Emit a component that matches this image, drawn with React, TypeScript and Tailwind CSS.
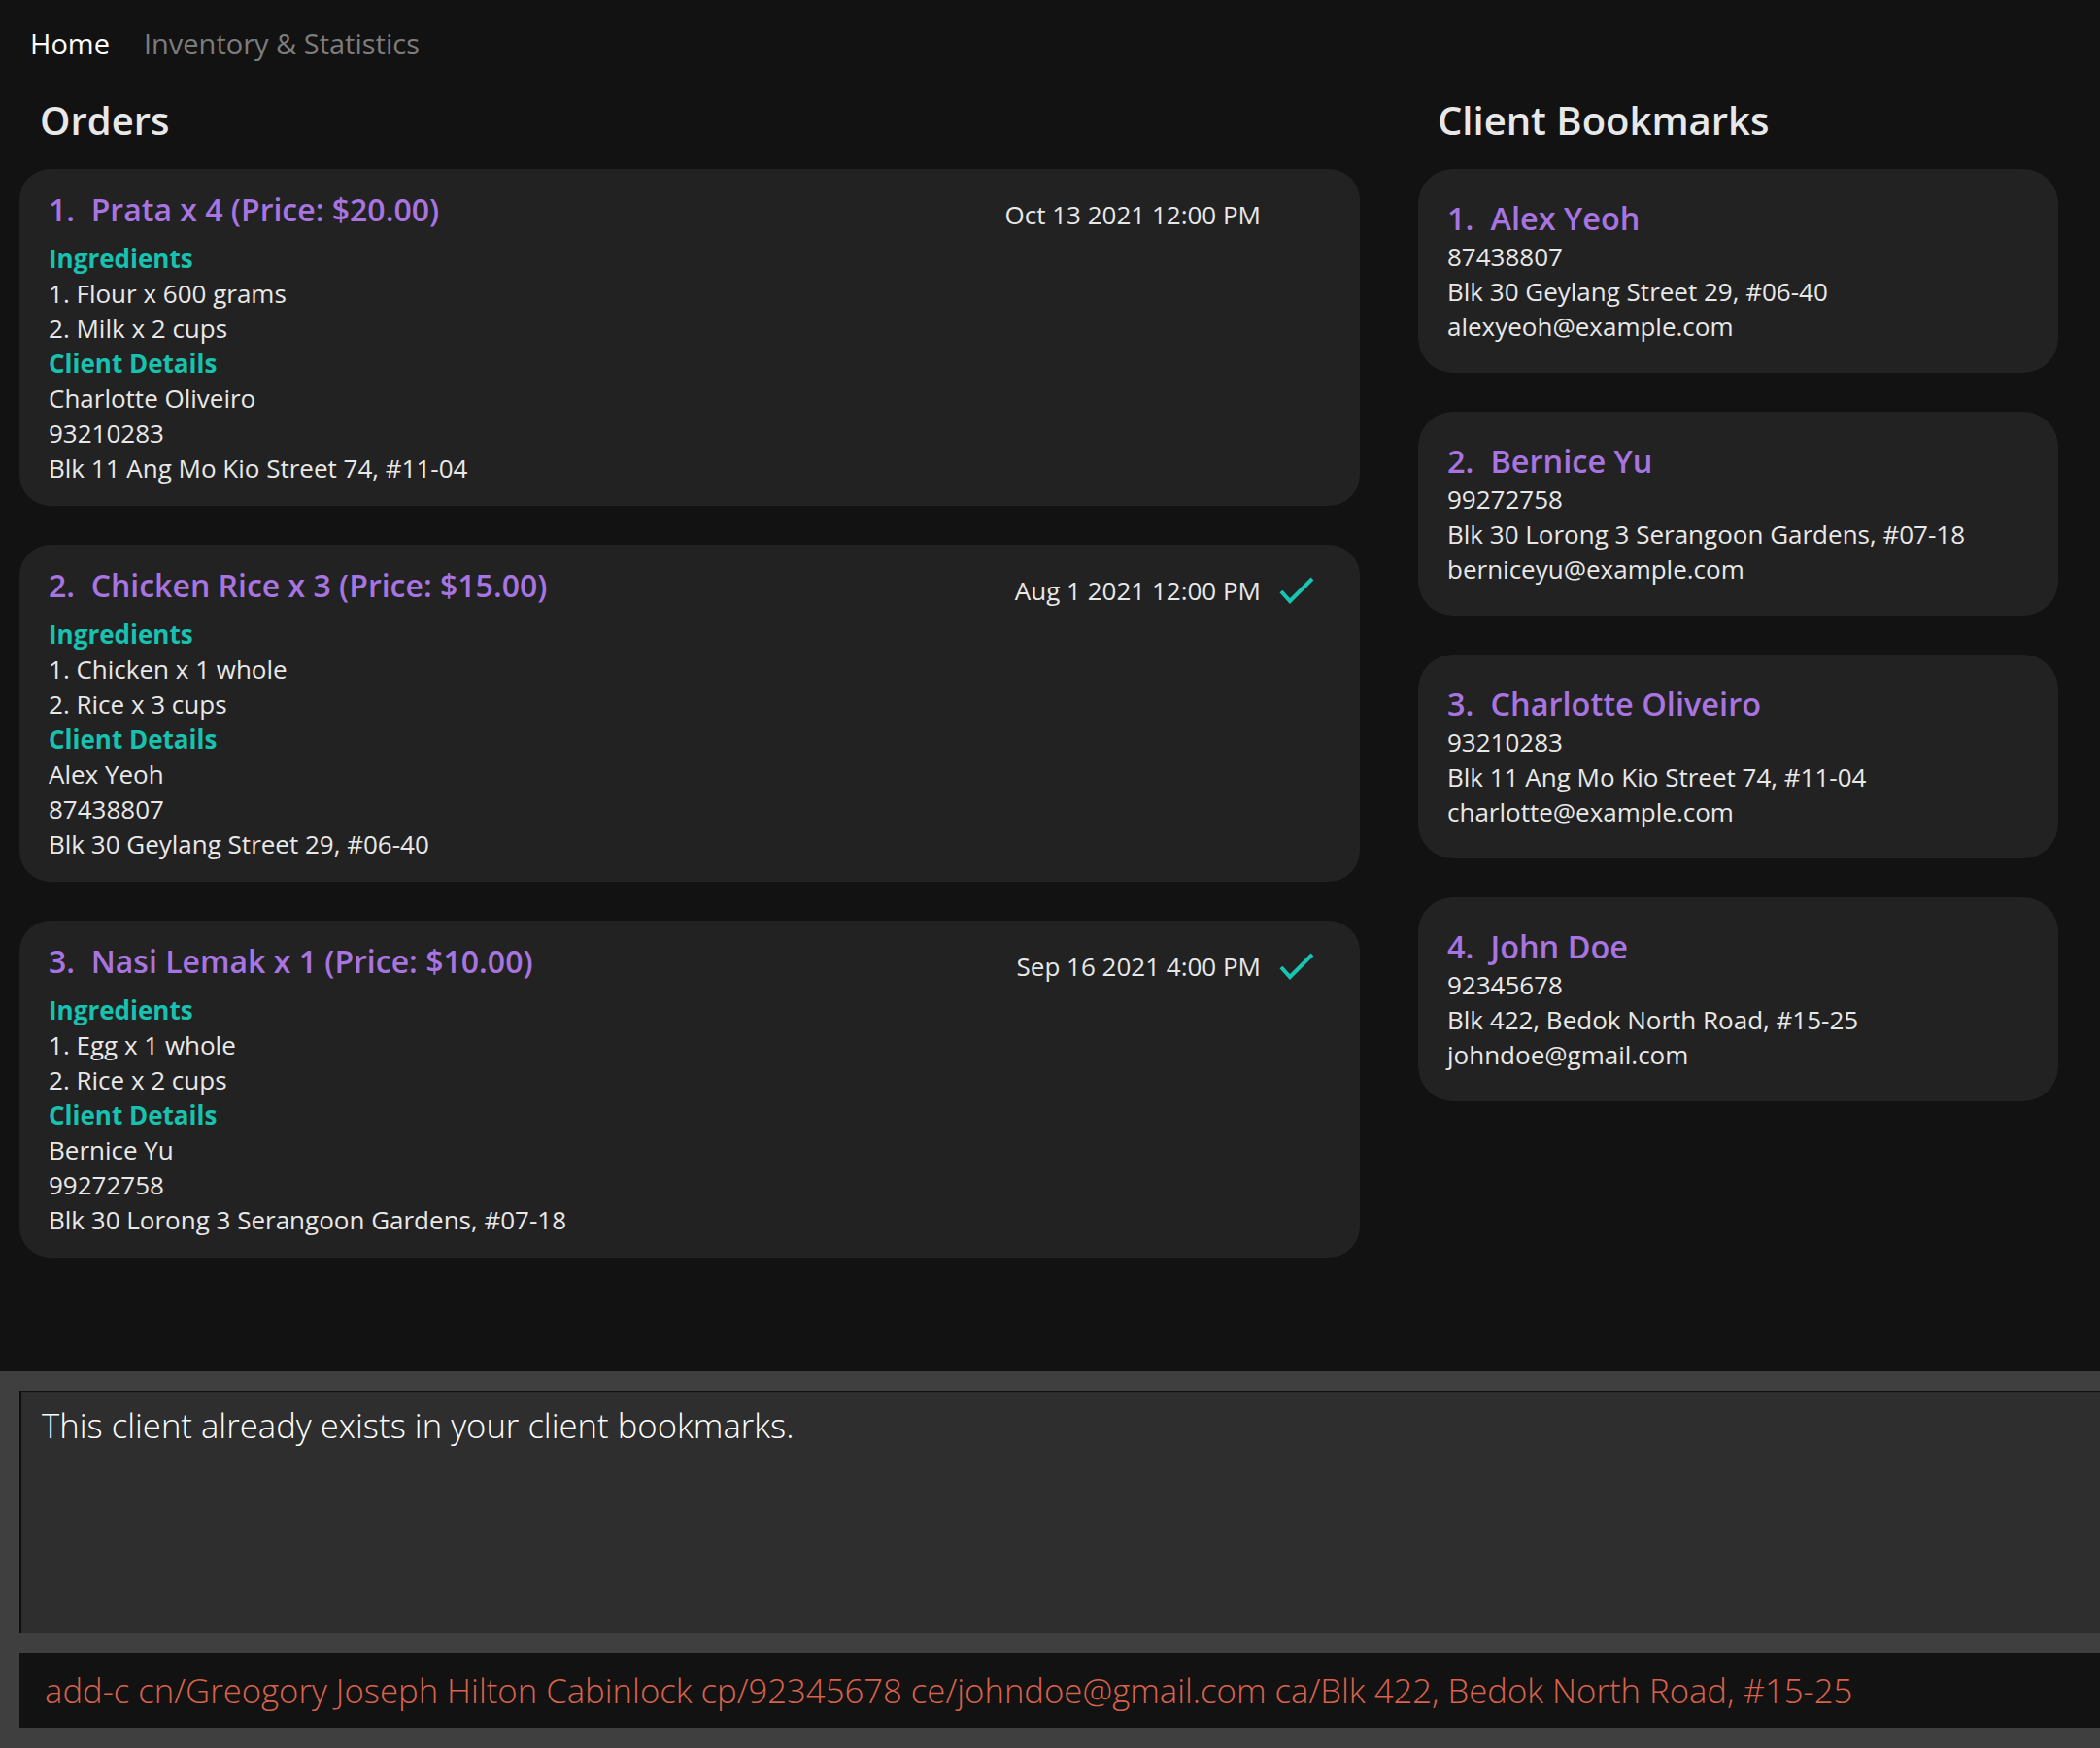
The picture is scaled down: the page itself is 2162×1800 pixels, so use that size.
const orders = [
  {
    title: "Prata x 4 (Price: $20.00)",
    date: "Oct 13 2021 12:00 PM",
    done: false,
    ingredients: ["Flour x 600 grams", "Milk x 2 cups"],
    client: ["Charlotte Oliveiro", "93210283", "Blk 11 Ang Mo Kio Street 74, #11-04"],
  },
  {
    title: "Chicken Rice x 3 (Price: $15.00)",
    date: "Aug 1 2021 12:00 PM",
    done: true,
    ingredients: ["Chicken x 1 whole", "Rice x 3 cups"],
    client: ["Alex Yeoh", "87438807", "Blk 30 Geylang Street 29, #06-40"],
  },
  {
    title: "Nasi Lemak x 1 (Price: $10.00)",
    date: "Sep 16 2021 4:00 PM",
    done: true,
    ingredients: ["Egg x 1 whole", "Rice x 2 cups"],
    client: ["Bernice Yu", "99272758", "Blk 30 Lorong 3 Serangoon Gardens, #07-18"],
  },
];

const bookmarks = [
  { name: "Alex Yeoh", phone: "87438807", address: "Blk 30 Geylang Street 29, #06-40", email: "alexyeoh@example.com" },
  { name: "Bernice Yu", phone: "99272758", address: "Blk 30 Lorong 3 Serangoon Gardens, #07-18", email: "berniceyu@example.com" },
  { name: "Charlotte Oliveiro", phone: "93210283", address: "Blk 11 Ang Mo Kio Street 74, #11-04", email: "charlotte@example.com" },
  { name: "John Doe", phone: "92345678", address: "Blk 422, Bedok North Road, #15-25", email: "johndoe@gmail.com" },
];

function Check() {
  return (
    <svg width="36" height="30" viewBox="0 0 36 30" className="block">
      <polyline points="2,16 11,26 34,3" fill="none" stroke="#17c5b1" strokeWidth="4" />
    </svg>
  );
}

function OrderCard({ index, order }: { index: number; order: (typeof orders)[number] }) {
  return (
    <div className="rounded-[32px] bg-[#222222] pl-[30px] pt-[20px] pb-[21px]">
      <div className="flex items-start justify-between">
        <div className="text-[32px] leading-[44px] font-semibold text-[#a875e0] whitespace-pre">
          {index}.  {order.title}
        </div>
        <div className="flex items-start">
          <div className="mt-[9px] text-[26px] leading-[36px] text-[#e8e8e8]">{order.date}</div>
          <div className="ml-[19px] mr-[47px] mt-[12px] w-[36px] h-[30px]">{order.done && <Check />}</div>
        </div>
      </div>
      <div className="mt-[9px] text-[26px] leading-[36px] text-[#e8e8e8]">
        <div className="font-bold text-[#17c2b0]">Ingredients</div>
        {order.ingredients.map((ing, i) => (
          <div key={ing}>
            {i + 1}. {ing}
          </div>
        ))}
        <div className="font-bold text-[#17c2b0]">Client Details</div>
        {order.client.map((line) => (
          <div key={line}>{line}</div>
        ))}
      </div>
    </div>
  );
}

function BookmarkCard({ index, b }: { index: number; b: (typeof bookmarks)[number] }) {
  return (
    <div className="rounded-[36px] bg-[#222222] pl-[30px] pt-[30px] pb-[30px]">
      <div className="text-[32.5px] leading-[42px] font-semibold text-[#a875e0] whitespace-pre">
        {index}.  {b.name}
      </div>
      <div className="text-[26px] leading-[36px] text-[#e8e8e8]">
        <div>{b.phone}</div>
        <div>{b.address}</div>
        <div>{b.email}</div>
      </div>
    </div>
  );
}

export default function App() {
  return (
    <div className="w-[2162px] h-[1800px] bg-[#121212] flex flex-col overflow-hidden font-['Open_Sans',sans-serif]">
      <div className="h-[65px] pt-[25px] pl-[31px] flex gap-[35px] text-[29px] leading-[40px]">
        <span className="text-white">Home</span>
        <span className="text-[#7c7c7c]">Inventory &amp; Statistics</span>
      </div>

      <div className="flex-1 flex pt-[35px]">
        <div className="ml-[20px] w-[1380px]">
          <h1 className="pl-[21px] text-[40px] leading-[48px] font-semibold text-[#e8e8e8]">Orders</h1>
          <div className="mt-[26px] flex flex-col gap-[40px]">
            {orders.map((o, i) => (
              <OrderCard key={o.title} index={i + 1} order={o} />
            ))}
          </div>
        </div>
        <div className="ml-[60px] w-[659px]">
          <h1 className="pl-[20px] text-[40px] leading-[48px] font-semibold text-[#e8e8e8]">Client Bookmarks</h1>
          <div className="mt-[26px] flex flex-col gap-[40px]">
            {bookmarks.map((b, i) => (
              <BookmarkCard key={b.name} index={i + 1} b={b} />
            ))}
          </div>
        </div>
      </div>

      <div className="h-[388px] bg-[#3f3f3f] pl-[20px] pt-[20px] flex flex-col gap-[20px]">
        <div className="h-[250px] bg-[#2e2e2e] shadow-[inset_2px_1px_1px_rgba(0,0,0,0.7)] pl-[23px] pt-[13px]">
          <div className="text-[34.7px] leading-[46px] font-light text-white">
            This client already exists in your client bookmarks.
          </div>
        </div>
        <div className="h-[77px] bg-[#121212] pl-[26px] text-[34.7px] leading-[77px] font-light text-[#d9624c] whitespace-nowrap">
          add-c cn/Greogory Joseph Hilton Cabinlock cp/92345678 ce/johndoe@gmail.com ca/Blk 422, Bedok North Road, #15-25
        </div>
      </div>
    </div>
  );
}
